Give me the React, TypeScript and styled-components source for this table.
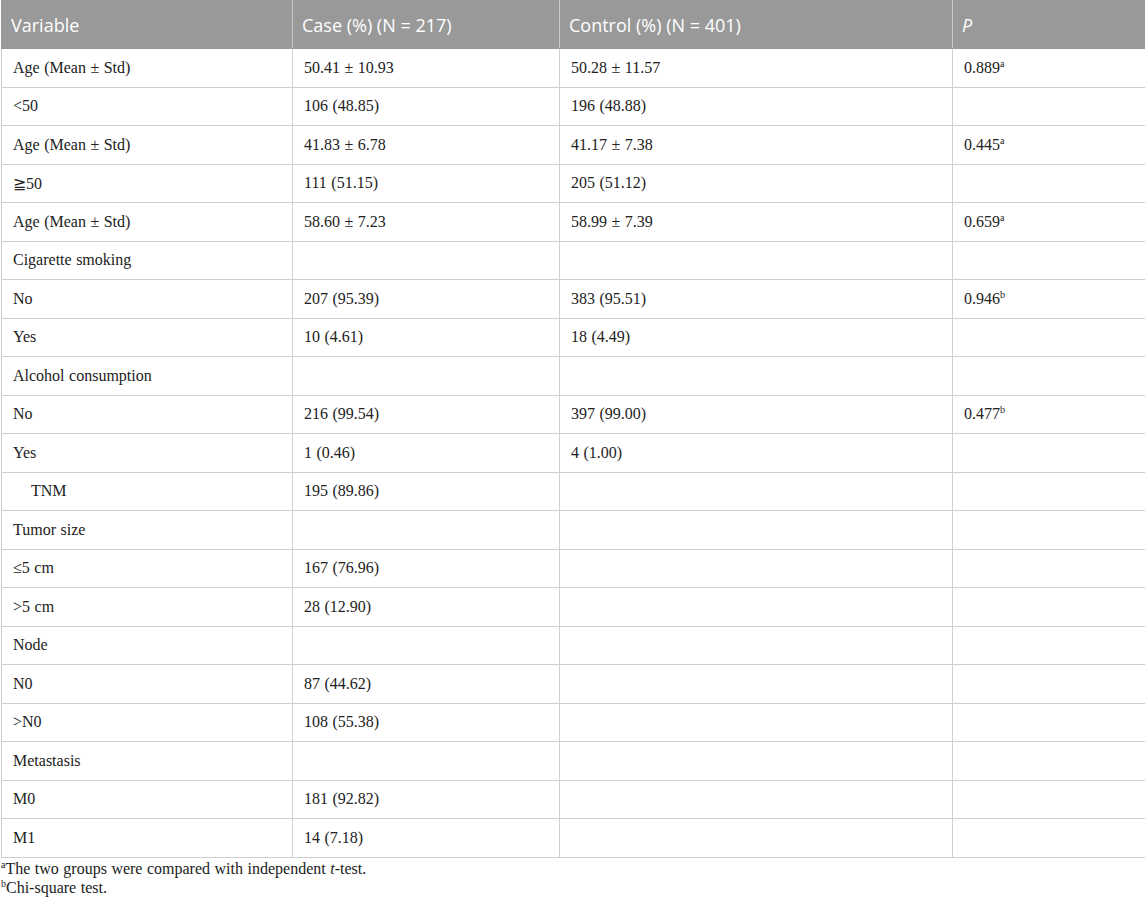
import React from "react";
import styled, { createGlobalStyle } from "styled-components";

const Global = createGlobalStyle`
  html, body { margin: 0; padding: 0; background: #fff; }
  body { font-family: "Liberation Serif", "Times New Roman", serif; color: #222; }
`;

const Wrap = styled.div`
  width: 1145px;
`;

const Table = styled.table`
  width: 1144px;
  margin-left: 1px;
  border-collapse: collapse;
  table-layout: fixed;
`;

const HeadCell = styled.th<{ $italic?: boolean }>`
  background: #999999;
  color: #fff;
  font-family: "Open Sans", "Liberation Sans", sans-serif;
  font-weight: 400;
  font-size: 18px;
  font-style: ${(p) => (p.$italic ? "italic" : "normal")};
  text-align: left;
  height: 44px;
  padding: 2px 0 1px 9px;
  border: 1px solid #999;
  border-left: 1px solid #c9c9c9;
  border-right: 1px solid #c9c9c9;
  &:first-child { border-left: 1px solid #999; }
`;

const Row = styled.tr`
  height: 38.5px;
`;

const Cell = styled.td<{ $indent?: boolean }>`
  border: 1px solid #cfcfcf;
  padding: 0 0 0 ${(p) => (p.$indent ? 29 : 11)}px;
  font-size: 16px;
  word-spacing: 0.5px;
  color: #222;
  vertical-align: middle;
`;

const Sup = styled.sup`
  font-size: 10px;
  vertical-align: 6px;
  line-height: 0;
`;

const Notes = styled.div`
  padding: 1px 0 0 1px;
  font-size: 16px;
  line-height: 19px;
  word-spacing: 0.5px;
  color: #222;
`;

type R = { v: string; c: string; k: string; p?: string; s?: string; indent?: boolean };

const rows: R[] = [
  { v: "Age (Mean ± Std)", c: "50.41 ± 10.93", k: "50.28 ± 11.57", p: "0.889", s: "a" },
  { v: "<50", c: "106 (48.85)", k: "196 (48.88)" },
  { v: "Age (Mean ± Std)", c: "41.83 ± 6.78", k: "41.17 ± 7.38", p: "0.445", s: "a" },
  { v: "≧50", c: "111 (51.15)", k: "205 (51.12)" },
  { v: "Age (Mean ± Std)", c: "58.60 ± 7.23", k: "58.99 ± 7.39", p: "0.659", s: "a" },
  { v: "Cigarette smoking", c: "", k: "" },
  { v: "No", c: "207 (95.39)", k: "383 (95.51)", p: "0.946", s: "b" },
  { v: "Yes", c: "10 (4.61)", k: "18 (4.49)" },
  { v: "Alcohol consumption", c: "", k: "" },
  { v: "No", c: "216 (99.54)", k: "397 (99.00)", p: "0.477", s: "b" },
  { v: "Yes", c: "1 (0.46)", k: "4 (1.00)" },
  { v: "TNM", c: "195 (89.86)", k: "", indent: true },
  { v: "Tumor size", c: "", k: "" },
  { v: "≤5 cm", c: "167 (76.96)", k: "" },
  { v: ">5 cm", c: "28 (12.90)", k: "" },
  { v: "Node", c: "", k: "" },
  { v: "N0", c: "87 (44.62)", k: "" },
  { v: ">N0", c: "108 (55.38)", k: "" },
  { v: "Metastasis", c: "", k: "" },
  { v: "M0", c: "181 (92.82)", k: "" },
  { v: "M1", c: "14 (7.18)", k: "" },
];

export default function App() {
  return (
    <Wrap>
      <Global />
      <Table>
        <colgroup>
          <col style={{ width: 291 }} />
          <col style={{ width: 267 }} />
          <col style={{ width: 393 }} />
          <col style={{ width: 193 }} />
        </colgroup>
        <thead>
          <tr>
            <HeadCell>Variable</HeadCell>
            <HeadCell>Case (%) (N = 217)</HeadCell>
            <HeadCell>Control (%) (N = 401)</HeadCell>
            <HeadCell $italic>P</HeadCell>
          </tr>
        </thead>
        <tbody>
          {rows.map((r, i) => (
            <Row key={i}>
              <Cell $indent={r.indent}>{r.v}</Cell>
              <Cell>{r.c}</Cell>
              <Cell>{r.k}</Cell>
              <Cell>
                {r.p}
                {r.s && <Sup>{r.s}</Sup>}
              </Cell>
            </Row>
          ))}
        </tbody>
      </Table>
      <Notes>
        <div>
          <Sup>a</Sup>The two groups were compared with independent <i>t</i>-test.
        </div>
        <div>
          <Sup>b</Sup>Chi-square test.
        </div>
      </Notes>
    </Wrap>
  );
}
